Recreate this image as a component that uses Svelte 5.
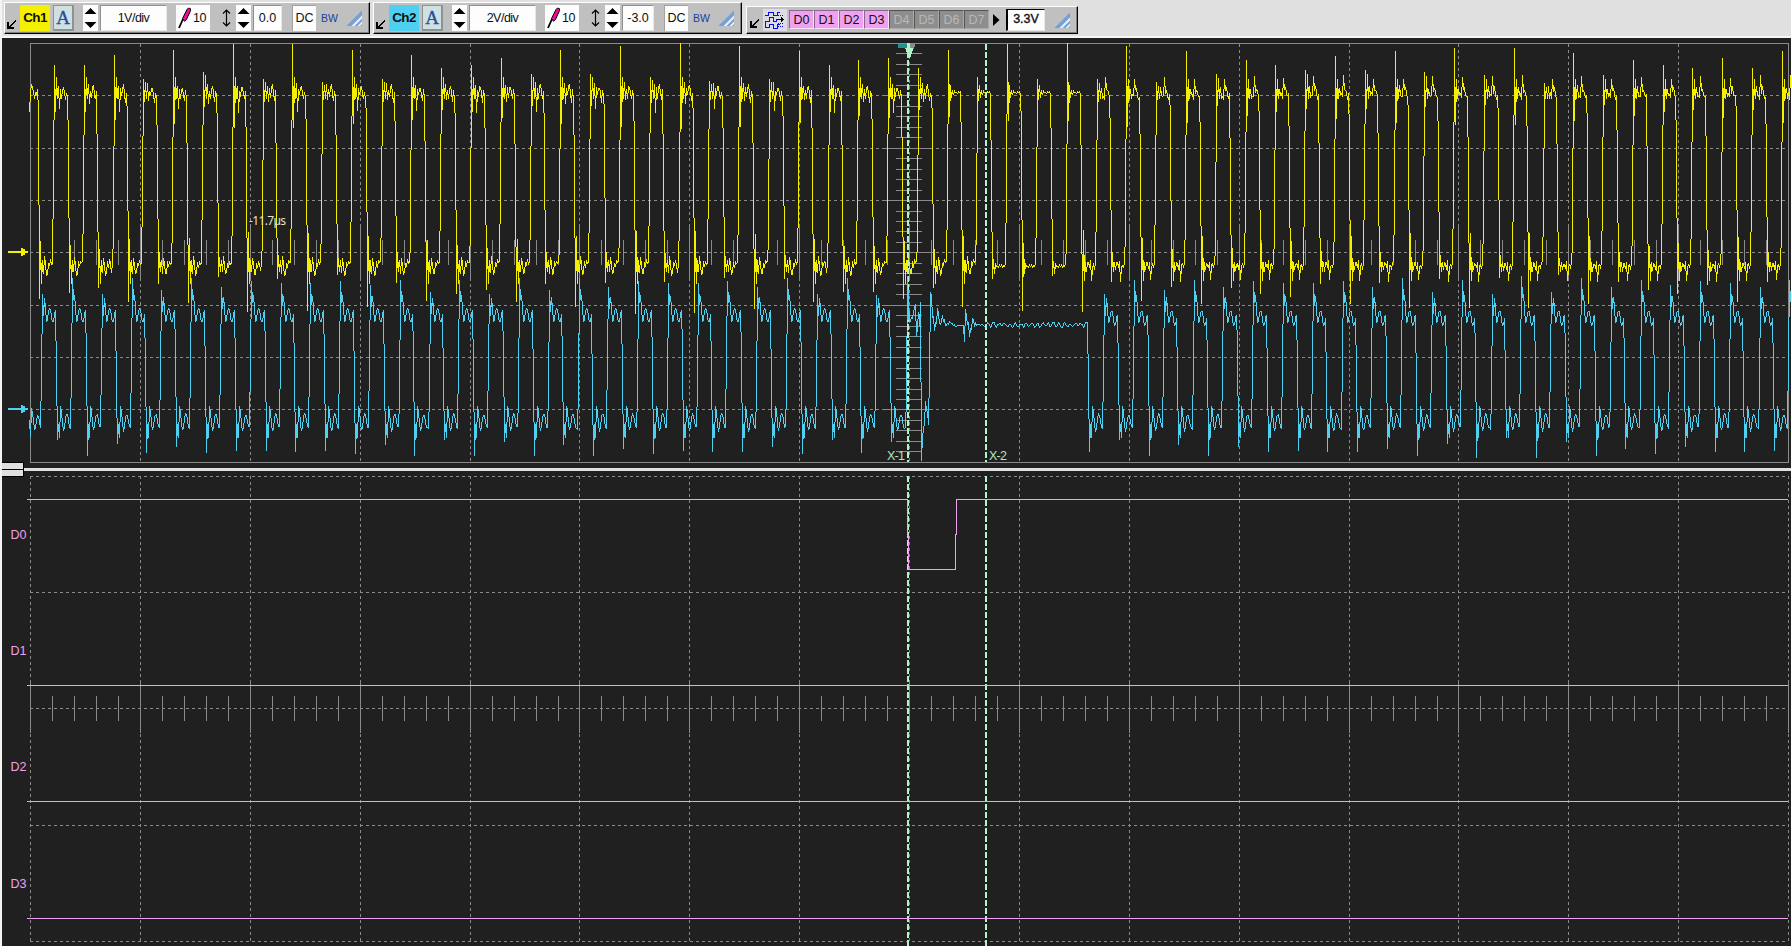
<script>
  const COLS = [30, 140, 250, 360, 470, 579, 689, 799, 909, 1019, 1129, 1239, 1349, 1458, 1568, 1678, 1788];
  const ROWS = [95, 148, 200, 252, 305, 357, 409];
  const DIGITAL_ROWS = [476, 592, 708, 825, 941];
  const PERIOD = 29.79;

  // Minor graticule ticks between the major divisions
  const ticks = [];
  for (let i = 0; i < 16; i++)
    for (let j = 1; j < 5; j++) ticks.push(Math.floor(COLS[i] + 22 * j));
  const centreTicks = [];
  for (let n = 1; n < 40; n++) if (n % 5) centreTicks.push(Math.round(43 + n * 10.47));

  // Overshoot and undershoot extents per pulse
  const yTops = [65, 65, 55, 79, 50, 72, 44, 79, 44, 82, 50, 79, 55, 68, 65, 58, 74, 50, 74, 46, 77, 43, 81, 46, 79, 51, 65, 60, 58, 68, 50, 77, 44, 79, 43, 79, 46, 82, 51, 74, 60, 65, 70, 56, 70, 51, 72, 48, 75, 48, 83, 53, 75, 60, 65, 68, 58, 68, 51];
  const yBots = [299, 293, 288, 302, 284, 303, 277, 312, 279, 311, 275, 307, 283, 301, 294, 290, 302, 284, 307, 283, 314, 282, 313, 278, 309, 279, 302, 292, 292, 299, 288, 307, 279, 311, 276, 312, 282, 301, 287, 304, 288, 294, 297, 284, 304, 283, 308, 279, 308, 278, 308, 275, 304, 282, 290, 294, 285, 302, 282];
  const cTopsA = [294, 278, 294, 278, 290, 278, 287, 281, 283, 283, 281, 285, 280, 292, 280, 294, 278, 290, 278, 287, 281, 283, 283, 281, 287, 278, 294, 278, 295];
  const cBotsA = [440, 456, 444, 453, 447, 453, 451, 451, 452, 451, 454, 445, 456, 440, 456, 442, 456, 445, 456, 449, 454, 451, 452, 452, 447, 454, 440, 453, 442];
  const cTopsB = [294, 280, 290, 280, 287, 281, 283, 283, 281, 287, 278, 292, 280, 294, 276, 292, 278, 287, 280, 285, 281, 283, 287, 280];
  const cBotsB = [452, 440, 456, 445, 456, 447, 452, 451, 452, 452, 449, 456, 444, 458, 438, 458, 442, 456, 449, 454, 447, 452, 452, 451];

  const wobble = (n, a) => Math.sin(n * 12.9898 + n * n * 0.37) * a;

  function put(arr, x, values) {
    values.forEach((v, i) => (arr[x + i] = v));
  }

  function yellow() {
    const y = [];
    put(y, 29, [112, 92, 84, 88, 91, 99, 92, 95, 89, 96]);
    for (let k = 0; k < 59; k++) {
      const f = Math.floor(39.4 + PERIOD * k);
      const r = Math.floor(54.5 + PERIOD * k);
      const b = yBots[k];
      const t = yTops[k];
      const d = b - 265;
      const quietLow = k >= 32 && k <= 34;
      const low = quietLow
        ? [b, 266 - d * 0.5, 274, 263, 267, 266, 268, 264, 267, 264, 268, 265, 267, 264, 266, 265]
        : k > 34
          ? [b, 265 - d * 0.75, 281, 262, 271, 263, 264, 269, 261, 281, 267, 264, 269, 262, 267, 270]
          : [b, 265 - d * 0.7, 284, 260, 273, 257, 265, 275, 273, 262, 267, 260, 264, 272, 265, 272];
      if (!quietLow) for (let i = 4; i < 16; i++) low[i] += wobble(k + i, 1.5);
      if (d < 20 && !quietLow) low[2] = 272;
      put(y, f, low);
      y[f - 1] = 110 + ((k * 0.37) % 1) * 90;
      y[r - 2] = 262;
      y[r - 1] = 175 + ((k * 0.41) % 1) * 75;
      const s = 92 - t;
      const quietHigh = k >= 30 && k <= 34;
      const high = quietHigh
        ? [t, 92 + s * 0.6, 85, 98, 90, 95, 90, 93, 92, 94, 91, 93, 91, 94]
        : k > 34
          ? [t, 92 + s * 0.75, t > 68 ? t + 4 : 79, 99, 87, 97, 94, 98, 77, 92, 88, 94, 98, 95]
          : [t, 92 + s * 0.75, t > 68 ? t + 3 : 77, 99, 84, k % 2 ? 102 : 111, 89, 97, 88, 86, 94, 101, 91, 98];
      if (!quietHigh) for (let i = 4; i < 14; i++) high[i] += wobble(k * 2 + i, 2);
      const next = Math.floor(39.4 + PERIOD * (k + 1)) - 1;
      for (let i = 0; i < high.length; i++) if (r + i < next) y[r + i] = high[i];
      for (let x = r + high.length; x < next; x++) y[x] = 90;
    }
    return y;
  }

  function cyanHigh(y, r, end, t, tilt) {
    const h = [t, t + 22, 298 + (294 - t) * -0.2, 308, 322, 319, 311, 308, 309, 317, 322, 321, 314, 310, 317];
    for (let i = 0; i < h.length && r + i < end; i++) y[r + i] = h[i] + (i > 3 ? (tilt * i) / 14 : 0);
    y[r - 1] = 400 - ((r * 0.37) % 1) * 50;
  }
  function cyanLow(y, f, end, b) {
    const l = [b, 424, 438, 406, 411, 424, 431, 427, 418, 414, 415, 421, 427, 428, 429];
    for (let i = 0; i < l.length && f + i < end; i++) y[f + i] = l[i] + (i > 3 ? wobble(f + i, 1) : 0);
    y[f - 1] = 345 + ((f * 0.29) % 1) * 50;
  }

  function cyan() {
    const y = [];
    put(y, 29, [420, 437, 408, 413, 420, 430, 427, 420, 415, 416, 422, 428, 400]);
    const rA = (k) => Math.floor(42.8 + PERIOD * k);
    const fA = (k) => Math.floor(57.5 + PERIOD * k);
    for (let k = 0; k < 29; k++) {
      cyanHigh(y, rA(k), fA(k), cTopsA[k], 0);
      cyanLow(y, fA(k), rA(k + 1), cBotsA[k]);
    }
    put(y, 904, [428, 428, 395, 276, 300, 322, 321, 317, 319, 311, 308, 304, 337, 326, 312, 326, 302, 461, 435, 430, 422, 401, 411, 411, 425, 371, 292, 296, 318, 316, 331, 322, 324, 308, 314, 323, 325, 321, 315, 322, 319, 326, 325, 323, 325, 321, 322, 324, 323, 326, 324, 327, 326]);
    for (let x = 957; x < 1088; x++) y[x] = 325 + (x > 986 ? Math.sin(x * 1.15) * 2.2 + wobble(x, 1.3) : x > 975 ? wobble(x, 1.5) : 0);
    put(y, 963, [325, 342, 309, 316, 325, 322, 337, 328, 330, 318, 319, 327, 322, 326]);
    const fB = (k) => Math.floor(1089.6 + PERIOD * k);
    const rB = (k) => Math.floor(1104.8 + PERIOD * k);
    for (let k = 0; k < 24; k++) {
      cyanLow(y, fB(k), rB(k), cBotsB[k]);
      cyanHigh(y, rB(k), fB(k + 1), cTopsB[k], 5);
    }
    return y;
  }

  // Each pixel column spans the halfway points to its neighbours
  function columns(y) {
    for (let x = 30; x < 1792; x++) y[x] ??= y[x - 1];
    let d = '';
    for (let x = 29; x < 1791; x++) {
      const v = y[x];
      const a = ((y[x - 1] ?? v) + v) / 2;
      const b = ((y[x + 1] ?? v) + v) / 2;
      const top = Math.max(43, Math.round(Math.min(a, b, v)));
      const bottom = Math.max(top + 1, Math.round(Math.max(a, b, v)));
      d += `M${x} ${top}h1V${bottom}h-1z`;
    }
    return d;
  }

  const ch1 = columns(yellow());
  const ch2 = columns(cyan());

  const channels = [
    { name: 'Ch1', cls: 'one', scale: '1V/div', offset: '0.0' },
    { name: 'Ch2', cls: 'two', scale: '2V/div', offset: '-3.0' }
  ];
  const bits = ['D0', 'D1', 'D2', 'D3', 'D4', 'D5', 'D6', 'D7'];
  const digital = [
    { name: 'D0', y: 539 },
    { name: 'D1', y: 655 },
    { name: 'D2', y: 771 },
    { name: 'D3', y: 888 }
  ];
</script>

{#snippet corner()}
  <svg class="corner" width="10" height="10" viewBox="0 0 10 10" shape-rendering="crispEdges">
    <path d="M9 .5 2 7.5" stroke="#000" stroke-width="2" /><path d="M0 2h2v5h5v2H0z" />
  </svg>
{/snippet}

{#snippet spin()}
  <svg class="spin" width="15" height="26" viewBox="0 0 15 26">
    <path d="M7.5 3 13.5 9H1.5zM1.5 17h12l-6 6z" />
  </svg>
{/snippet}

{#snippet stripes()}
  <svg class="stripes" width="16" height="16" viewBox="0 0 16 16">
    <path d="M0 16 16 0v16z" fill="#e9f1fa" />
    <path d="M0 16 16 0v5.5L5.5 16zM8.5 16 16 8.5v3L11.500 16zM14 16l2-2v2z" fill="#78a0d2" />
  </svg>
{/snippet}

<main>
  <header>
    {#each channels as c}
      <section class="panel {c.cls}-panel">
        {@render corner()}
        <b class="name {c.cls}">{c.name}</b>
        <span class="auto">A</span>
        {@render spin()}
        <span class="field scale">{c.scale}</span>
        <span class="probe">
          <svg width="14" height="22" viewBox="0 0 14 22">
            <path d="M1 21 5 12" stroke="#000" stroke-width="1.8" />
            <path d="M4.5 11.5 9 2.500 10.500 1l2 .7v2L8.500 12.500l-2 1.800z" fill="#f0089a" stroke="#000" />
          </svg>
          10
        </span>
        <svg class="updown" width="9" height="18" viewBox="0 0 9 18" fill="none" stroke="#000" stroke-width="1.2">
          <path d="M4.5 1v16M1 4.5 4.5 1 8 4.5M1 13.5 4.5 17 8 13.5" />
        </svg>
        {@render spin()}
        <span class="field offset">{c.offset}</span>
        <span class="dc">DC</span>
        <span class="bw">BW</span>
        {@render stripes()}
      </section>
    {/each}
    <section class="panel logic">
      {@render corner()}
      <svg class="bus" width="24" height="22" viewBox="0 0 24 22" shape-rendering="crispEdges" fill="none" stroke="#0808ff">
        <path d="M2 6.5h3v-3h5v3h4v-3h3M2 12.5h4v-4h4v4h3v-3M2 13v5h4v-3h4v4h4v-4h3" />
        <path d="M15 6.5h6M15 14.5h6M15 17.5h6" stroke-dasharray="1 1" />
        <path d="M14 10.5h7M18 8v5M19 9v3" stroke="#000" />
      </svg>
      <div class="bits">
        {#each bits as b, i}<span class:off={i > 3}>{b}</span>{/each}
      </div>
      <svg class="play" width="7" height="12" viewBox="0 0 7 12"><path d="M0 0 6.5 6 0 12z" /></svg>
      <span class="threshold">3.3V</span>
      {@render stripes()}
    </section>
  </header>

  <svg class="analog" width="1789" height="425" viewBox="2 38 1789 425" shape-rendering="crispEdges">
    <g class="grid">
      <path d="M30.5 462.5V43.5H1788.5V462.5H30" />
      {#each COLS.slice(1, -1) as x}
        <path class="dash" d="M{x + 0.5} 44V462" />
        <path d="M{x + 0.5} 227V279" />
      {/each}
      {#each ROWS as y}
        <path class="dash" d="M30 {y + 0.5}H1788" />
        <path d="M882 {y + 0.5}H933" />
      {/each}
      {#each ticks as x}<path d="M{x + 0.5} 240V265" />{/each}
      {#each centreTicks as y}<path d="M896 {y + 0.5}H922" />{/each}
    </g>
    <path d={ch1} fill="#f4f000" />
    <path d={ch2} fill="#50d0f0" />
    <path d="M8 251h13v-3h2v1h2v2h3v2h-3v2h-2v1h-2v-3H8z" fill="#f4f000" />
    <path d="M8 408h13v-3h2v1h2v2h3v2h-3v2h-2v1h-2v-3H8z" fill="#50d0f0" />
    <path d="M905 44h10v3h-1v2h-1v2h-3v3h-3z" fill="#8a8a8a" />
    <path d="M898 44h9v4h-9z" fill="#209090" />
    <path class="cursor" d="M908 44V462M986 44V462" />
    <path d="M907 276h1v14h1v30h-2z" fill="#50d0f0" />
    <path d="M907 43h3v5h3v3h-1v3h-1v3h-1v1h-2v-2h-1v-4h-1v-3h-1v-1h2z" fill="#b0f4c8" />
    <text class="time" x="249" y="225" textLength="37">-11.7µs</text>
    <text class="mark" x="887" y="460" textLength="18">X-1</text>
    <text class="mark" x="989" y="460" textLength="18">X-2</text>
  </svg>

  <div class="divider"></div>

  <svg class="logic-view" width="1789" height="475" viewBox="2 471 1789 475" shape-rendering="crispEdges">
    <g class="grid">
      {#each COLS as x}
        <path class="dash" d="M{x + 0.5} 476V942" />
        <path d="M{x + 0.5} 681V733" />
      {/each}
      {#each DIGITAL_ROWS as y}<path class="dash" d="M30 {y + 0.5}H1788" />{/each}
      {#each ticks as x}<path d="M{x + 0.5} 696V721" />{/each}
    </g>
    <path class="cursor" d="M908 476V946M986 476V946" />
    <g class="bitline">
      <path d="M27 499.5H907.5V535.5H908.5V569.5H955.5V534.5H956.5V499.5H1788" />
      <path d="M27 685.5H1788M27 801.5H1788M27 918.5H1788" />
    </g>
    {#each digital as d}<text class="bitname" x="10.5" y={d.y} textLength="16">{d.name}</text>{/each}
  </svg>
  <div class="handle"><i></i><i></i></div>
</main>

<style>
  :global(body) { background: #202020; overflow: hidden; }
  main {
    position: relative;
    box-sizing: border-box;
    width: 1791px;
    height: 946px;
    overflow: hidden;
    display: flex;
    flex-direction: column;
    background: #202020;
    border-left: 2px solid #f4f4f4;
    font: 12.5px 'Liberation Sans', Arial, sans-serif;
    color: #101010;
  }
  header {
    flex: none;
    box-sizing: border-box;
    height: 38px;
    margin-left: -2px;
    padding: 2px 0 0 4px;
    display: flex;
    gap: 3px;
    background: #e0e0e0;
    border-bottom: 2px solid #f6f6f6;
  }
  .panel {
    flex: none;
    box-sizing: border-box;
    width: 366px;
    height: 32px;
    display: flex;
    align-items: center;
    padding: 0 0 0 2px;
    background: #c0c0c0;
    border: 1px solid #fff;
    border-right: 1px solid #000;
    border-bottom: 1px solid #000;
    box-shadow: inset -1px -1px #808080;
  }
  .two-panel { width: 369px; }
  .panel svg { flex: none; }
  .corner { margin-top: 13px; }
  .panel > span, .name { flex: none; box-sizing: border-box; height: 26px; line-height: 25px; text-align: center; white-space: nowrap; }
  .name { width: 30px; margin-left: 3px; font-size: 13.5px; letter-spacing: -0.6px; }
  .one { background: #f4f000; }
  .two { background: #50d0f0; }
  .panel > .auto {
    width: 21px;
    margin-left: 3px;
    border: 1px solid #8a9494;
    border-width: 1px 2px 2px 1px;
    background: #d0dfe0;
    color: #2050a0;
    font: 19px/24px 'Liberation Serif', serif;
    -webkit-text-stroke: 0.3px #2050a0;
  }
  .spin { background: #fdfdfd; }
  .auto + .spin { margin-left: 9px; }
  .field, .threshold { background: #fdfdfd; border: 1px solid #e8e8e8; border-top-color: #909090; border-left-color: #909090; }
  .scale { width: 67px; margin-left: 2px; letter-spacing: -0.5px; }
  .probe { width: 34px; margin-left: 9px; display: flex; align-items: center; gap: 1px; padding-left: 2px; background: #fdfdfd; letter-spacing: -0.4px; }
  .updown { margin: 0 5px 0 12px; }
  .offset { width: 29px; margin-left: 2px; }
  .two-panel .offset { width: 32px; }
  .dc { width: 24px; margin-left: 10px; background: #fdfdfd; border-left: 1px solid #a0a0a0; border-top: 1px solid #a0a0a0; }
  .bw { width: 17px; margin: 1px 8px 0 5px; color: #1840a0; font-size: 10.5px; }
  .panel.logic {
    width: 332px;
    height: 28px;
    margin: 4px 0 0 1px;
  }
  .logic .corner { margin: 8px 0 0 1px; }
  .bus { margin-left: 3px; background: #dcdce4; }
  .bits { display: flex; margin: -2px 4px 0 2px; }
  .bits span {
    box-sizing: border-box;
    width: 25px;
    height: 19px;
    border: 1px solid #8a6a8a;
    border-right-color: #fce0fc;
    border-bottom-color: #fce0fc;
    background: #f0a0f0;
    line-height: 18px;
    text-align: center;
  }
  .bits .off { background: #8e8e8e; border-color: #555 #aaa #aaa #555; color: #b8b8b8; }
  .panel > .threshold { width: 39px; height: 22px; margin: -1px 9px 0 6px; line-height: 19px; border: 1px solid #e8e8e8; border-top: 1px solid #000; border-left: 2px solid #000; -webkit-text-stroke: 0.35px #101010; }
  .analog, .logic-view { flex: none; display: block; }
  .analog { margin-bottom: 5px; }
  .divider { flex: none; height: 3px; background: #e0e0e0; }
  .grid path { fill: none; stroke: #8a8a8a; stroke-width: 1; }
  .grid .dash { stroke-dasharray: 3 3; }
  .cursor { fill: none; stroke: #b0f4c8; stroke-width: 2; stroke-dasharray: 6 2; }
  .bitline path { fill: none; stroke: #f0a0f0; stroke-width: 1; }
  .bitname { fill: #f0a0f0; font-size: 12.5px; }
  .time { fill: #e8e2c4; font: 12px 'Noto Sans', sans-serif; }
  .mark { fill: #b0e8b8; font-size: 12.5px; }
  .handle {
    position: absolute;
    left: 0;
    top: 462px;
    width: 22px;
    height: 15px;
    box-sizing: border-box;
    display: flex;
    flex-direction: column;
    gap: 1px;
    padding: 1px 1px 1px 0;
    background: #000;
  }
  .handle i { flex: 1; background: #e0e0e0; }
</style>
